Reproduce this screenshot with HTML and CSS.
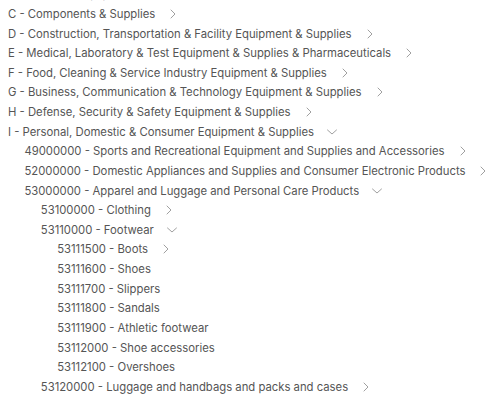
FILE: index.html
```html
<!DOCTYPE html>
<html>
<head>
<meta charset="utf-8">
<link rel="stylesheet" href="styles.css">
</head>
<body>
<ul class="tree root">
  <li><div class="row"><span class="label">B - Industrial Equipment &amp; Tools</span><svg class="chev" viewBox="0 0 12 12"><path d="M4 2l4 4-4 4"/></svg></div></li>
  <li><div class="row"><span class="label">C - Components &amp; Supplies</span><svg class="chev" viewBox="0 0 12 12"><path d="M4 2l4 4-4 4"/></svg></div></li>
  <li><div class="row"><span class="label">D - Construction, Transportation &amp; Facility Equipment &amp; Supplies</span><svg class="chev" viewBox="0 0 12 12"><path d="M4 2l4 4-4 4"/></svg></div></li>
  <li><div class="row"><span class="label">E - Medical, Laboratory &amp; Test Equipment &amp; Supplies &amp; Pharmaceuticals</span><svg class="chev" viewBox="0 0 12 12"><path d="M4 2l4 4-4 4"/></svg></div></li>
  <li><div class="row"><span class="label">F - Food, Cleaning &amp; Service Industry Equipment &amp; Supplies</span><svg class="chev" viewBox="0 0 12 12"><path d="M4 2l4 4-4 4"/></svg></div></li>
  <li><div class="row"><span class="label">G - Business, Communication &amp; Technology Equipment &amp; Supplies</span><svg class="chev" viewBox="0 0 12 12"><path d="M4 2l4 4-4 4"/></svg></div></li>
  <li><div class="row"><span class="label">H - Defense, Security &amp; Safety Equipment &amp; Supplies</span><svg class="chev" viewBox="0 0 12 12"><path d="M4 2l4 4-4 4"/></svg></div></li>
  <li><div class="row"><span class="label">I - Personal, Domestic &amp; Consumer Equipment &amp; Supplies</span><svg class="chev" viewBox="0 0 12 12"><path d="M1.5 4l4.5 4 4.5-4"/></svg></div>
    <ul class="tree">
      <li><div class="row"><span class="label">49000000 - Sports and Recreational Equipment and Supplies and Accessories</span><svg class="chev" viewBox="0 0 12 12"><path d="M4 2l4 4-4 4"/></svg></div></li>
      <li><div class="row"><span class="label">52000000 - Domestic Appliances and Supplies and Consumer Electronic Products</span><svg class="chev" viewBox="0 0 12 12"><path d="M4 2l4 4-4 4"/></svg></div></li>
      <li><div class="row"><span class="label">53000000 - Apparel and Luggage and Personal Care Products</span><svg class="chev" viewBox="0 0 12 12"><path d="M1.5 4l4.5 4 4.5-4"/></svg></div>
        <ul class="tree">
          <li><div class="row"><span class="label">53100000 - Clothing</span><svg class="chev" viewBox="0 0 12 12"><path d="M4 2l4 4-4 4"/></svg></div></li>
          <li><div class="row"><span class="label">53110000 - Footwear</span><svg class="chev" viewBox="0 0 12 12"><path d="M1.5 4l4.5 4 4.5-4"/></svg></div>
            <ul class="tree">
              <li><div class="row"><span class="label">53111500 - Boots</span><svg class="chev" viewBox="0 0 12 12"><path d="M4 2l4 4-4 4"/></svg></div></li>
              <li><div class="row"><span class="label">53111600 - Shoes</span></div></li>
              <li><div class="row"><span class="label">53111700 - Slippers</span></div></li>
              <li><div class="row"><span class="label">53111800 - Sandals</span></div></li>
              <li><div class="row"><span class="label">53111900 - Athletic footwear</span></div></li>
              <li><div class="row"><span class="label">53112000 - Shoe accessories</span></div></li>
              <li><div class="row"><span class="label">53112100 - Overshoes</span></div></li>
            </ul>
          </li>
          <li><div class="row"><span class="label">53120000 - Luggage and handbags and packs and cases</span><svg class="chev" viewBox="0 0 12 12"><path d="M4 2l4 4-4 4"/></svg></div></li>
        </ul>
      </li>
    </ul>
  </li>
</ul>
</body>
</html>
```
FILE: styles.css
```css
html, body {
  margin: 0;
  padding: 0;
  background: #ffffff;
  overflow: hidden;
}
body {
  font-family: Inter, "Noto Sans", sans-serif;
  font-size: 11.3px;
  color: #555555;
}
.tree {
  list-style: none;
  margin: 0;
  padding: 0 0 0 16.4px;
}
.root {
  margin-top: -15.5px;
  padding-left: 8px;
}
.row {
  display: flex;
  align-items: center;
  height: 19.63px;
  white-space: nowrap;
}
.chev {
  width: 12px;
  height: 12px;
  margin-left: 12px;
  flex: none;
  fill: none;
  stroke: #a0a0a0;
  stroke-width: 1;
  stroke-linecap: round;
  stroke-linejoin: round;
}
```
